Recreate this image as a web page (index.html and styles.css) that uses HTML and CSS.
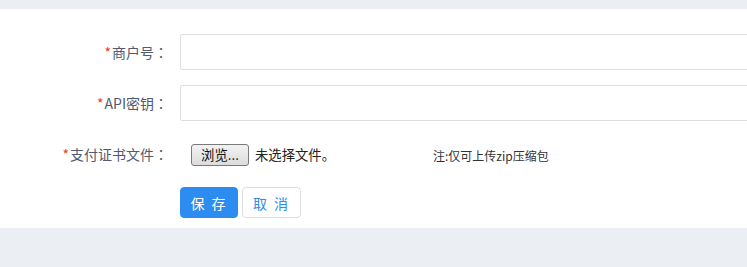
FILE: index.html
```html
<!DOCTYPE html>
<html lang="zh-CN">
<head>
    <meta charset="utf-8">
    <meta name="viewport" content="width=device-width,initial-scale=1.0">
    <link rel="stylesheet" href="styles.css">
</head>
<body>
    <div class="panel">
        <form class="pay-form">
            <div class="form-item">
                <label class="form-label"><span class="req">*</span>商户号<span class="colon" lang="ja">：</span></label>
                <div class="form-ctrl"><input type="text" class="text-input"></div>
            </div>
            <div class="form-item">
                <label class="form-label"><span class="req">*</span>API密钥<span class="colon" lang="ja">：</span></label>
                <div class="form-ctrl"><input type="text" class="text-input"></div>
            </div>
            <div class="form-item">
                <label class="form-label"><span class="req">*</span>支付证书文件<span class="colon" lang="ja">：</span></label>
                <div class="form-ctrl">
                    <div class="file-box">
                        <span class="file-btn">浏览...</span>
                        <span class="file-name">未选择文件。</span>
                    </div>
                    <span class="file-tip">注:仅可上传zip压缩包</span>
                </div>
            </div>
            <div class="form-actions">
                <button type="button" class="btn btn-primary">保 存</button>
                <button type="button" class="btn btn-default">取 消</button>
            </div>
        </form>
    </div>
</body>
</html>
```

FILE: styles.css
```css
html, body {margin: 0; padding: 0;}
body {background: #ebeef3; font-family: "Noto Sans CJK SC", "Noto Sans", sans-serif; font-size: 14px; color: #515a6e; padding-top: 9px; overflow: hidden;}
.panel {background: #fff; height: 219px; overflow: hidden;}
.pay-form {padding-top: 25px;}
.form-item {display: flex; align-items: center; height: 36px; margin-bottom: 15px;}
.form-label {width: 168px; text-align: right; margin-right: 12px; line-height: 20px; flex-shrink: 0;}
.req {color: #ed4014; margin-right: 1px;}
.colon {font-family: "Noto Sans CJK JP", sans-serif;}
.form-ctrl {display: flex; align-items: center; flex-shrink: 0;}
.text-input {box-sizing: border-box; width: 620px; height: 36px; border: 1px solid #dcdee2; border-radius: 2px; padding: 0 8px; outline: none; font: inherit;}
.file-box {display: flex; align-items: center; width: 242px; margin-left: 11px; font-size: 13.33px; color: #222;}
.file-btn {box-sizing: border-box; width: 58px; height: 22px; line-height: 19px; text-align: center; border: 1px solid #7a7a7a; border-radius: 3px; background: linear-gradient(#f2f2f2, #dcdcdc); color: #111; margin-right: 6px; margin-top: 2px;}
.file-tip {font-size: 12px; color: #333; margin-top: 2px;}
.form-actions {display: flex; gap: 4px; padding-left: 180px;}
.btn {box-sizing: border-box; height: 31px; width: 58px; border-radius: 4px; font: inherit; font-size: 14px; letter-spacing: 2px; cursor: pointer;}
.btn-primary {background: #2d8cf0; border: 1px solid #2d8cf0; color: #fff;}
.btn-default {width: 59px; background: #fff; border: 1px solid #dcdee2; color: #2d8cf0;}
```
